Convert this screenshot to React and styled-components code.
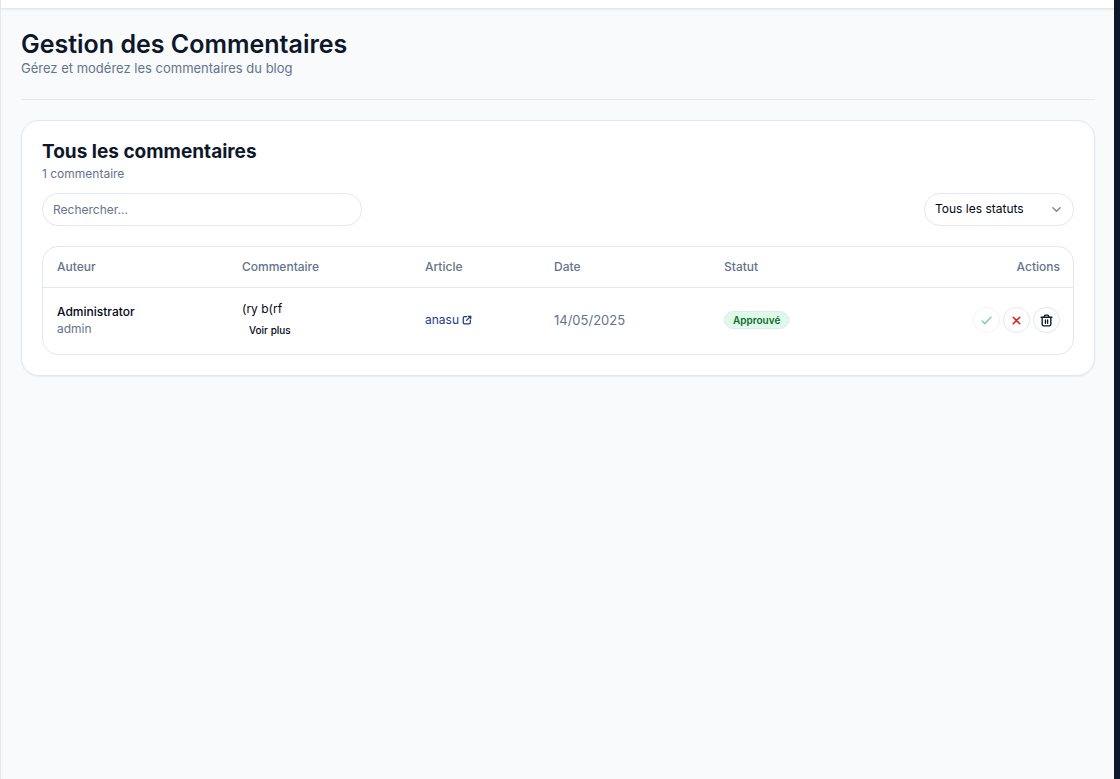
import React from "react";
import styled, { createGlobalStyle } from "styled-components";

const color = {
  ink: "#0f172a",
  text: "#020817",
  muted: "#64748b",
  line: "#e2e8f0",
  canvas: "#f8fafc",
  link: "#1e3a8a",
};

const GlobalStyle = createGlobalStyle`
  *, *::before, *::after { box-sizing: border-box; }
  body {
    margin: 0;
    background: ${color.canvas};
    color: ${color.text};
    font-family: Inter, "Liberation Sans", sans-serif;
    font-size: 12px;
    line-height: 18px;
  }
  button, input, select { font: inherit; color: inherit; }
`;

const Shell = styled.div`
  min-height: 100vh;
  border-left: 1px solid ${color.line};
  border-right: 6px solid ${color.ink};
`;

const TopBar = styled.header`
  height: 9px;
  background: #fff;
  border-bottom: 1px solid ${color.line};
  box-shadow: 0 1px 2px rgba(15, 23, 42, 0.06);
`;

const Content = styled.main`
  display: flex;
  flex-direction: column;
  gap: 20px;
  padding: 20px 19px 20px 20px;
`;

const PageHeader = styled.div`
  padding-bottom: 22px;
  border-bottom: 1px solid ${color.line};
`;

const PageTitle = styled.h1`
  margin: 0;
  color: ${color.ink};
  font-size: 25px;
  font-weight: 600;
  line-height: 30px;
`;

const PageSubtitle = styled.p`
  margin: 0;
  color: ${color.muted};
  font-size: 13px;
  line-height: 18px;
`;

const Card = styled.section`
  display: flex;
  flex-direction: column;
  padding: 20px;
  background: #fff;
  border: 1px solid ${color.line};
  border-radius: 18px;
  box-shadow: 0 1px 2px rgba(15, 23, 42, 0.06);
`;

const CardTitle = styled.h2`
  margin: 0;
  color: ${color.ink};
  font-size: 19px;
  font-weight: 700;
  line-height: 22px;
`;

const CardNote = styled.p`
  margin: 0;
  padding: 2px 0 10px;
  color: ${color.muted};
`;

const Toolbar = styled.div`
  display: flex;
  justify-content: space-between;
  gap: 20px;
  margin-bottom: 20px;
`;

const SearchInput = styled.input`
  width: 320px;
  height: 33px;
  padding: 0 10px;
  background: #fff;
  border: 1px solid ${color.line};
  border-radius: 16px;
  &::placeholder { color: ${color.muted}; opacity: 1; }
`;

const SelectWrap = styled.div`
  display: grid;
  align-items: center;
  width: 150px;
  > * { grid-area: 1 / 1; }
  > svg { justify-self: end; margin-right: 12px; color: #7c8492; pointer-events: none; }
`;

const StatusSelect = styled.select`
  appearance: none;
  width: 100%;
  height: 33px;
  padding: 0 30px 1px 10px;
  background: #fff;
  border: 1px solid ${color.line};
  border-radius: 16px;
`;

const TableFrame = styled.div`
  overflow: hidden;
  border: 1px solid ${color.line};
  border-radius: 16px;
`;

const Table = styled.table`
  width: 100%;
  table-layout: fixed;
  border-spacing: 0;
`;

const Th = styled.th`
  width: ${(p) => p.$width || "auto"};
  height: 41px;
  padding: 0 14px;
  border-bottom: 1px solid ${color.line};
  color: ${color.muted};
  font-weight: 500;
  text-align: left;
  &:last-child { padding-right: 13px; text-align: right; }
`;

const Td = styled.td`
  height: 66px;
  padding: 0 14px 2px;
  &:last-child { padding-right: 13px; }
`;

const AuthorName = styled.div`
  font-weight: 500;
  line-height: 17px;
`;

const AuthorLogin = styled.div`
  color: ${color.muted};
  line-height: 17px;
`;

const MoreButton = styled.button`
  display: block;
  padding: 0 7px;
  margin: 3px 0 1px;
  background: none;
  border: 0;
  font-size: 10px;
  font-weight: 500;
  cursor: pointer;
`;

const ArticleLink = styled.a`
  display: flex;
  align-items: center;
  gap: 3px;
  color: ${color.link};
  text-decoration: none;
`;

const DateText = styled.time`
  display: block;
  color: ${color.muted};
  font-size: 13px;
`;

const Badge = styled.span`
  display: block;
  width: fit-content;
  padding: 0 8px;
  background: #dcfce7;
  border: 1px solid ${color.line};
  border-radius: 9px;
  color: #166534;
  font-size: 10px;
  font-weight: 600;
  line-height: 16px;
`;

const Actions = styled.div`
  display: flex;
  justify-content: flex-end;
  gap: 3px;
`;

const IconButton = styled.button`
  display: grid;
  place-items: center;
  width: 27px;
  height: 26px;
  padding: 0;
  background: #fff;
  border: 1px solid ${color.line};
  border-radius: 14px;
  color: ${(p) => p.$tone || color.ink};
  cursor: pointer;
  &:disabled { opacity: 0.5; cursor: default; }
`;

const Icon = ({ size = 13, width = 3, children }) => (
  <svg
    width={size}
    height={size}
    viewBox="0 0 24 24"
    fill="none"
    stroke="currentColor"
    strokeWidth={width}
    strokeLinecap="round"
    strokeLinejoin="round"
    aria-hidden="true"
  >
    {children}
  </svg>
);

const comments = [
  {
    name: "Administrator",
    login: "admin",
    text: "(ry b(rf",
    article: "anasu",
    date: "14/05/2025",
    status: "Approuvé",
  },
];

function CommentRow({ comment }) {
  return (
    <tr>
      <Td>
        <AuthorName>{comment.name}</AuthorName>
        <AuthorLogin>{comment.login}</AuthorLogin>
      </Td>
      <Td>
        {comment.text}
        <MoreButton type="button">Voir plus</MoreButton>
      </Td>
      <Td>
        <ArticleLink href="#article">
          {comment.article}
          <Icon size={10}>
            <path d="M11 4H6a3 3 0 0 0-3 3v11a3 3 0 0 0 3 3h11a3 3 0 0 0 3-3v-5M11 13 21 3M15 3h6v6" />
          </Icon>
        </ArticleLink>
      </Td>
      <Td>
        <DateText>{comment.date}</DateText>
      </Td>
      <Td>
        <Badge>{comment.status}</Badge>
      </Td>
      <Td>
        <Actions>
          <IconButton type="button" $tone="#16a34a" aria-label="Approuver" disabled>
            <Icon>
              <path d="m4 13 5 5L20 6" />
            </Icon>
          </IconButton>
          <IconButton type="button" $tone="#dc2626" aria-label="Rejeter">
            <Icon>
              <path d="m6 6 12 12M18 6 6 18" />
            </Icon>
          </IconButton>
          <IconButton type="button" aria-label="Supprimer">
            <Icon width={2.5}>
              <path d="M2 6h20M8 6V4a2 2 0 0 1 2-2h4a2 2 0 0 1 2 2v2M4 6v13a3 3 0 0 0 3 3h10a3 3 0 0 0 3-3V6M10 11v6M14 11v6" />
            </Icon>
          </IconButton>
        </Actions>
      </Td>
    </tr>
  );
}

export default function App() {
  return (
    <>
      <GlobalStyle />
      <Shell>
        <TopBar />
        <Content>
          <PageHeader>
            <PageTitle>Gestion des Commentaires</PageTitle>
            <PageSubtitle>Gérez et modérez les commentaires du blog</PageSubtitle>
          </PageHeader>
          <Card>
            <CardTitle>Tous les commentaires</CardTitle>
            <CardNote>1 commentaire</CardNote>
            <Toolbar>
              <SearchInput type="search" placeholder="Rechercher..." aria-label="Rechercher" />
              <SelectWrap>
                <StatusSelect aria-label="Statut" defaultValue="all">
                  <option value="all">Tous les statuts</option>
                  <option value="approved">Approuvé</option>
                </StatusSelect>
                <Icon size={11}>
                  <path d="m4 8 8 8 8-8" />
                </Icon>
              </SelectWrap>
            </Toolbar>
            <TableFrame>
              <Table>
                <thead>
                  <tr>
                    <Th $width="185px">Auteur</Th>
                    <Th $width="183px">Commentaire</Th>
                    <Th $width="129px">Article</Th>
                    <Th $width="170px">Date</Th>
                    <Th>Statut</Th>
                    <Th $width="130px">Actions</Th>
                  </tr>
                </thead>
                <tbody>
                  {comments.map((comment) => (
                    <CommentRow key={comment.login} comment={comment} />
                  ))}
                </tbody>
              </Table>
            </TableFrame>
          </Card>
        </Content>
      </Shell>
    </>
  );
}
